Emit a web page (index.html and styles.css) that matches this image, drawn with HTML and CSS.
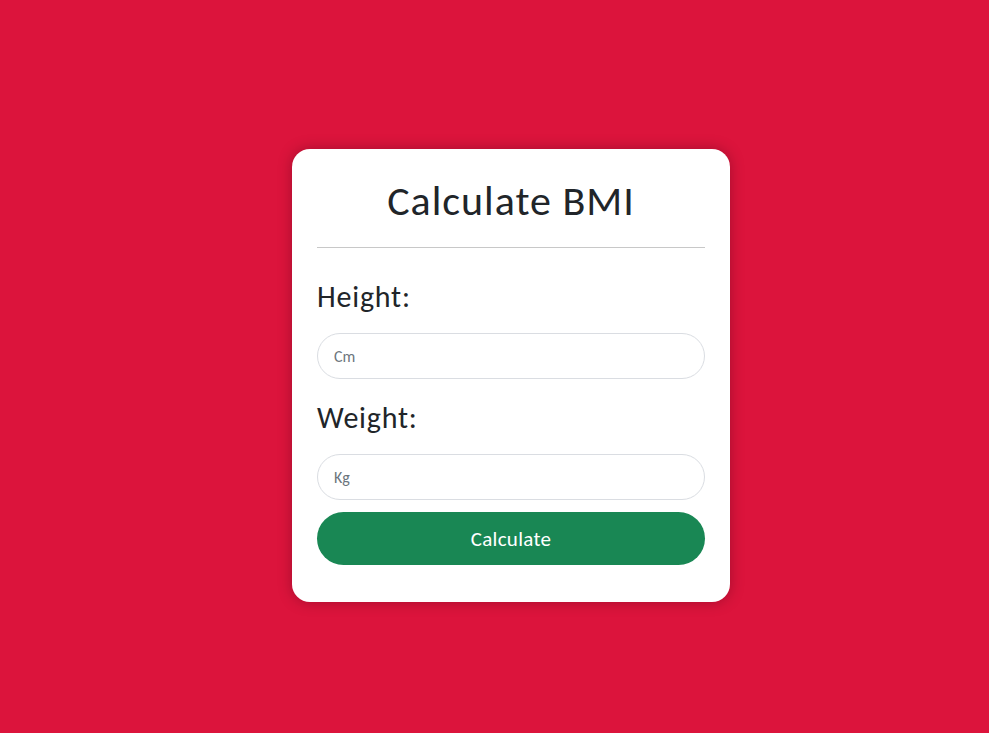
FILE: index.html
```html
<!DOCTYPE html>
<html>
<head>
<meta charset="utf-8">
<link rel="stylesheet" href="styles.css">
</head>
<body>
<div class="page">
  <div class="card">
    <h1 class="title">Calculate BMI</h1>
    <hr class="divider">
    <label class="label" for="h">Height:</label>
    <input class="field" id="h" type="text" placeholder="Cm">
    <label class="label label-second" for="w">Weight:</label>
    <input class="field" id="w" type="text" placeholder="Kg">
    <button class="btn" type="button">Calculate</button>
  </div>
</div>
</body>
</html>
```
FILE: styles.css
```css
html, body {
  margin: 0;
  padding: 0;
  background: #dc143c;
  height: 100%;
}
.page {
  padding: 149px 0 0 292px;
  font-family: Carlito, Lato, "Liberation Sans", sans-serif;
}
.card {
  width: 438px;
  height: 453px;
  box-sizing: border-box;
  background: #fff;
  border-radius: 18px;
  padding: 24px 25px 25px;
  box-shadow: 0 0 14px rgba(60, 0, 20, 0.35);
  display: flex;
  flex-direction: column;
}
.title {
  margin: 0;
  font-weight: 400;
  font-size: 42px;
  line-height: 56px;
  text-align: center;
  color: #212529;
  letter-spacing: 1px;
}
.divider {
  margin: 18px 0 0;
  border: 0;
  border-top: 1px solid #c8c8c8;
  height: 0;
}
.label {
  margin-top: 29px;
  font-size: 30px;
  line-height: 40px;
  color: #212529;
  letter-spacing: 0.8px;
}
.label-second {
  margin-top: 19px;
}
.field {
  margin-top: 16px;
  height: 46px;
  box-sizing: border-box;
  border: 1px solid #dadde2;
  border-radius: 23px;
  padding: 0 16px;
  font-family: inherit;
  font-size: 16px;
  color: #212529;
  outline: none;
}
.field::placeholder {
  color: #6c757d;
}
.btn {
  margin-top: 12px;
  height: 53px;
  border: 0;
  border-radius: 27px;
  background: #198754;
  color: #fff;
  font-family: inherit;
  font-size: 21px;
  letter-spacing: 0.3px;
}
```
